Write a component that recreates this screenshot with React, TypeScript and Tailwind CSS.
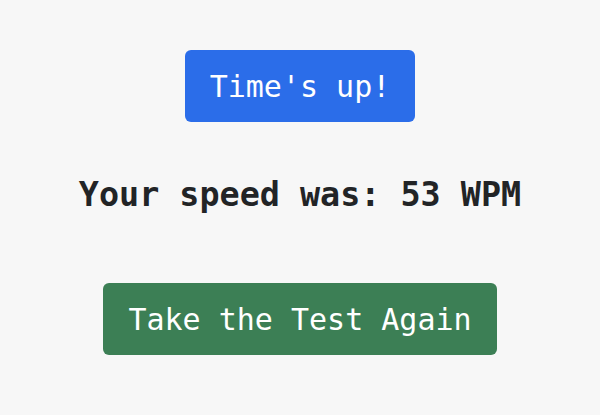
export default function App() {
  return (
    <div
      className="min-h-screen w-full bg-[#f7f7f7] flex flex-col items-center pt-[50px]"
      style={{ fontFamily: '"DejaVu Sans Mono", "Liberation Mono", monospace' }}
    >
      <div className="rounded-md bg-[#2b6de9] px-[25px] h-[72px] flex items-center text-[30px] text-white">
        Time's up!
      </div>
      <h1 className="mt-[53px] text-[33.4px] leading-[40px] font-bold text-[#222426]">
        Your speed was: 53 WPM
      </h1>
      <button className="mt-[68px] rounded-md bg-[#3c7f55] px-[25px] h-[72px] flex items-center text-[30px] text-white">
        Take the Test Again
      </button>
    </div>
  );
}
